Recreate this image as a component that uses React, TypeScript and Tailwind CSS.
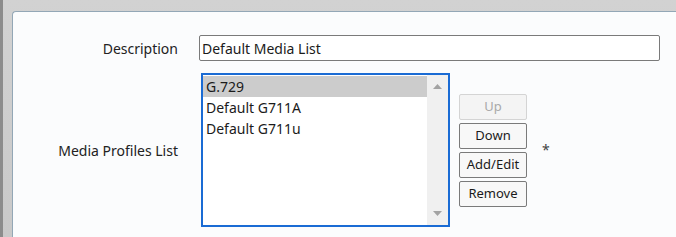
import React from 'react';

const FONT = { fontFamily: '"Noto Sans", "Open Sans", Arial, sans-serif' };

function ListBox({ items, selected }: { items: string[]; selected: number }) {
  return (
    <div className="flex w-[249px] h-[154px] border-2 border-[#1a6bd4] bg-white">
      <div className="flex-1 pt-[1px]">
        {items.map((it, i) => (
          <div
            key={it}
            className={`h-[21px] leading-[21px] pl-[3px] text-[14px] text-[#1b1b1b] ${i === selected ? 'bg-[#cccccc]' : ''}`}
          >
            {it}
          </div>
        ))}
      </div>
      <div className="w-[21px] bg-[#f0f0f0] flex flex-col items-center justify-between py-[9px]">
        <svg width="9" height="5" viewBox="0 0 9 5">
          <path d="M0 5 L4.5 0 L9 5 Z" fill="#a3a3a3" />
        </svg>
        <svg width="9" height="5" viewBox="0 0 9 5">
          <path d="M0 0 L9 0 L4.5 5 Z" fill="#a3a3a3" />
        </svg>
      </div>
    </div>
  );
}

function Btn({ label, disabled }: { label: string; disabled?: boolean }) {
  return (
    <button
      className={`w-[68px] h-[26px] rounded-[2px] border text-[13px] leading-none ${
        disabled ? 'border-[#d4d4d4] bg-[#f4f4f4] text-[#a9a9a9]' : 'border-[#7a7a7a] bg-[#f8f8f8] text-[#1b1b1b]'
      }`}
    >
      {label}
    </button>
  );
}

export default function App() {
  return (
    <div className="w-[676px] h-[237px] overflow-hidden flex bg-gradient-to-b from-[#d2d2d2] to-[#c9c9c9]" style={FONT}>
      <div className="w-[3px] bg-[#8c8c8c]" />
      <div className="flex-1 mt-[11px] ml-[9px] rounded-tl-[4px] border-l border-t border-[#93a7b6] bg-[#fbfcfd]">
        <div className="flex items-center pt-[23px]">
          <div className="w-[165px] text-right text-[14px] text-[#222]">Description</div>
          <input
            readOnly
            value="Default Media List"
            className="ml-[21px] w-[461px] h-[26px] border border-[#7a7a7a] rounded-[2px] bg-white px-[2px] text-[14px] text-[#1b1b1b] outline-none"
            style={FONT}
          />
        </div>
        <div className="flex items-center mt-[12px]">
          <div className="w-[165px] text-right text-[14px] text-[#222]">Media Profiles List</div>
          <div className="ml-[23px]">
            <ListBox items={['G.729', 'Default G711A', 'Default G711u']} selected={0} />
          </div>
          <div className="ml-[9px] flex flex-col gap-[3px]">
            <Btn label="Up" disabled />
            <Btn label="Down" />
            <Btn label="Add/Edit" />
            <Btn label="Remove" />
          </div>
          <div className="ml-[15px] text-[14px] text-[#444] -mt-[2px]">*</div>
        </div>
      </div>
    </div>
  );
}
